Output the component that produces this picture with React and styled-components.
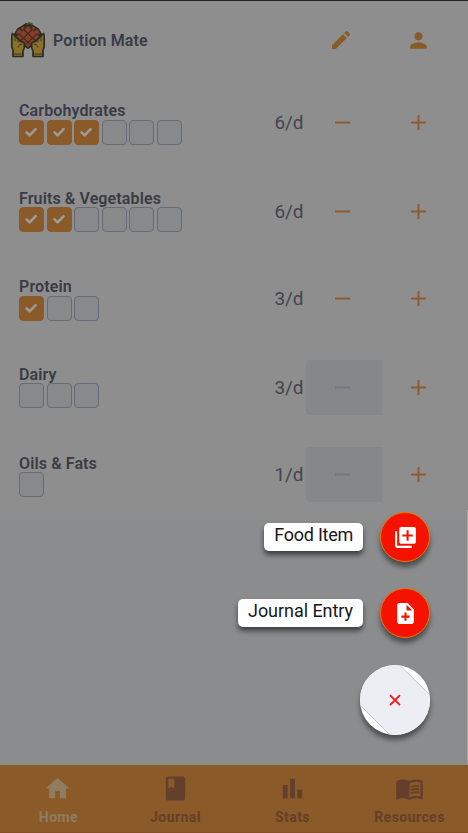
import React from "react";
import styled, { createGlobalStyle, css } from "styled-components";
import { MdEdit, MdPerson, MdHome, MdBook, MdBarChart, MdMenuBook, MdLibraryAdd, MdNoteAdd } from "react-icons/md";

const c = {
  page: "#8e8e8e", lower: "#8b8c8e", orange: "#8a5a28", ink: "#3a3b45",
  line: "#686a78", disabled: "#868789", brown: "#643f2b", active: "#8e7d60", red: "#f51300",
};

const GlobalStyle = createGlobalStyle`
  * { box-sizing: border-box; }
  body { margin: 0; font-family: Roboto, sans-serif; overflow: hidden; }
`;
const Screen = styled.div`
  position: relative;
  display: flex;
  flex-direction: column;
  width: 468px;
  height: 833px;
  background: ${c.lower};
`;
const Main = styled.main`
  height: 520px;
  background: ${c.page};
  border-top: 1px solid #252227;
`;
const Header = styled.header`
  display: flex;
  align-items: center;
  height: 78px;
  padding: 0 11px 0 10px;
`;
const Title = styled.h1`
  flex: 1;
  margin: 1px 0 0 7px;
  font-size: 16px;
  line-height: 20px;
  font-weight: 600;
  letter-spacing: 0.1px;
  color: ${c.ink};
`;
const HeaderAction = styled.button`
  display: flex;
  align-items: center;
  justify-content: center;
  width: 77px;
  height: 54px;
  padding: ${(p) => p.$nudge};
  border: 0;
  background: none;
  color: ${c.orange};
  font-size: ${(p) => p.$size}px;
`;
const FoodRow = styled.section`
  display: flex;
  height: 88px;
  padding: 16px 10.5px 0 19px;
`;
const Details = styled.div`
  flex: 1;
  padding-top: 6px;
`;
const Name = styled.h2`
  margin: 0;
  height: 19px;
  font-size: 16px;
  line-height: ${(p) => p.$leading}px;
  font-weight: 600;
  letter-spacing: 0.12px;
  color: ${c.ink};
`;
const Boxes = styled.div`
  display: flex;
  gap: 2.5px;
  margin-top: ${(p) => -p.$lift}px;
`;
const Box = styled.span`
  display: grid;
  place-items: center;
  width: 25px;
  height: 25px;
  border: 1px solid ${c.line};
  border-radius: 4px;
  background: #88898b;
  ${(p) => p.$checked && css`background: ${c.orange}; border-color: ${c.orange};`}
`;
const Controls = styled.div`
  display: flex;
  padding-top: ${(p) => p.$drop}px;
`;
const Amount = styled.span`
  margin-top: 13.5px;
  width: 31px;
  font-size: 19px;
  line-height: 28px;
  letter-spacing: -0.1px;
  white-space: nowrap;
  color: #44454d;
`;
const StepButton = styled.button`
  display: grid;
  place-items: center;
  width: 76px;
  height: 55px;
  padding: 0 2px 0 0;
  border: 0;
  border-radius: 4px 0 0 4px;
  background: ${(p) => (p.disabled ? c.disabled : "transparent")};
  color: ${(p) => (p.disabled ? "#747582" : "#925a2c")};
`;
const TabBar = styled.nav`
  display: grid;
  grid-template-columns: repeat(4, 1fr);
  height: 68px;
  margin-top: auto;
  background: ${c.orange};
  border-bottom: 1px solid #855026;
`;
const Tab = styled.a`
  display: flex;
  flex-direction: column;
  align-items: center;
  padding: 8px 0 0 0;
  color: ${(p) => (p.$active ? c.active : c.brown)};
`;
const TabIcon = styled.span`
  display: flex;
  align-items: center;
  height: 30px;
  padding-right: ${(p) => p.$inset}px;
  font-size: 29px;
`;
const TabText = styled.span`
  margin-top: 6px;
  font-size: 14px;
  font-weight: 700;
  line-height: 16px;
  letter-spacing: 0.45px;
`;
const EdgeLine = styled.div`
  position: absolute;
  top: 510px;
  right: 0;
  width: 1px;
  height: 254px;
  background: #a4a4a4;
`;
const SpeedDial = styled.div`
  position: absolute;
  right: 38px;
  top: 512.4px;
  display: flex;
  flex-direction: column;
  align-items: flex-end;
  gap: 26px;
`;
const DialItem = styled.div`
  display: flex;
  align-items: center;
  gap: 17px;
`;
const DialLabel = styled.span`
  height: 28px;
  padding: 0 10px;
  border-radius: 5px;
  background: #fff;
  color: #171717;
  font-size: 18px;
  line-height: 24px;
  letter-spacing: ${(p) => p.$spacing}px;
  box-shadow: 0 4px 5px rgba(0, 0, 0, 0.55);
`;
const DialButton = styled.button`
  display: grid;
  place-items: center;
  width: 50px;
  height: 50px;
  padding: 0;
  border: 1px solid #e77a00;
  border-radius: 50%;
  background: ${c.red};
  color: #fff;
  font-size: ${(p) => p.$size}px;
  box-shadow: 0 5px 5px rgba(0, 0, 0, 0.45);
`;
const CloseButton = styled.button`
  display: grid;
  width: 70px;
  height: 70px;
  margin-top: 0.4px;
  padding: 0;
  border: 0;
  border-radius: 50%;
  overflow: hidden;
  background: #fff;
  box-shadow: 0 5px 5px rgba(0, 0, 0, 0.45);
`;

const Check = () => (
  <svg width="13" height="11" viewBox="0 0 13 11">
    <path d="M1.6 5.3 4.6 8.3 10.6 2.1" fill="none" stroke="#9c9b9a" strokeWidth="2.6" strokeLinecap="round" strokeLinejoin="round" />
  </svg>
);
const StepIcon = ({ plus }) => (
  <svg width="15" height="15" viewBox="0 0 15 15" stroke="currentColor" strokeWidth="2">
    <path d={plus ? "M0 7.5H15M7.5 0V15" : "M0 7.5H15"} />
  </svg>
);
const Logo = () => (
  <svg width="36" height="38" viewBox="0 0 36 38" strokeLinejoin="round" strokeLinecap="round">
    <path d="M5 13 8 8 13 5 16 3 20 3 23 5 28 8 31 13 24 22 18 27 12 22Z" fill="#3b2c24" stroke="#2d2b28" strokeWidth="2" />
    <g fill="#8d3f25">
      <path d="M18 5.2 21.3 8.5 18 11.8 14.7 8.5ZM13.5 9.2 17 12.7 13.5 16.2 10 12.7ZM22.5 9.2 26 12.7 22.5 16.2 19 12.7ZM18 13.5 21.5 17 18 20.5 14.5 17ZM9 13.5 12.5 17 9.5 20 6 16ZM27 13.5 30 16 26.5 20 23.5 17ZM13.5 17.8 17 21.3 14.5 23.7 11 20.5ZM22.5 17.8 25 20.5 21.5 23.7 19 21.3ZM18 22 20.5 24 18 26 15.5 24ZM9 8 12 11 9 13 6 12ZM27 8 24 11 27 13 30 12ZM13 5.5 14.5 7 12.5 9 10.5 7ZM23 5.5 25.5 7 23.5 9 21.5 7Z" />
    </g>
    <path d="m17 3 2-1 3 1" fill="none" stroke="#3b5928" strokeWidth="1.8" />
    <g fill="#89732a" stroke="#2d2b26" strokeWidth="1.7">
      <path d="M2.5 12.5Q1.5 14 1.8 17V26L3 29V35.5H13V30L14.5 26 14 21.5 11 20.5 6 16Z" />
      <path d="M33.5 12.5Q34.5 14 34.2 17V26L33 29V35.5H23V30L21.5 26 22 21.5 25 20.5 30 16Z" />
    </g>
    <path d="M5 16V20M8 17V21M10 19V21M31 16V20M28 17V21M26 19V21M8 26Q9 23 12 23M28 26Q27 23 24 23M3 33H13M23 33H33" fill="none" stroke="#393126" strokeWidth="0.9" />
  </svg>
);
const CloseArt = () => (
  <svg width="70" height="70" viewBox="0 0 70 70">
    <path d="M-10-10H29.5L80 40V80H40L-10 30Z" fill="#edeef3" stroke="#c3c7d8" />
    <path d="m30 30.2 10 10M40 30.2 30 40.2" stroke="#fa1515" strokeWidth="1.9" />
  </svg>
);

const foods = [
  { name: "Carbohydrates", used: 3, total: 6, lift: 0, drop: 0, leading: 19 },
  { name: "Fruits & Vegetables", used: 2, total: 6, lift: 1, drop: 1, leading: 19 },
  { name: "Protein", used: 1, total: 3, lift: 0, drop: 0, leading: 19 },
  { name: "Dairy", used: 0, total: 3, lift: 0.6, drop: 1, leading: 19 },
  { name: "Oils & Fats", used: 0, total: 1, lift: 0, drop: 0, leading: 21 },
];
const tabs = [
  { name: "Home", Icon: MdHome, active: true, inset: 2 },
  { name: "Journal", Icon: MdBook, inset: 1 },
  { name: "Stats", Icon: MdBarChart, inset: 1 },
  { name: "Resources", Icon: MdMenuBook, inset: 0 },
];

export default function App() {
  return (
    <Screen>
      <GlobalStyle />
      <Main>
        <Header>
          <Logo />
          <Title>Portion Mate</Title>
          <HeaderAction $size={24} $nudge="0 1px 1px 0" aria-label="Edit"><MdEdit /></HeaderAction>
          <HeaderAction $size={25} $nudge="0" aria-label="Profile"><MdPerson /></HeaderAction>
        </Header>
        {foods.map((food) => (
          <FoodRow key={food.name}>
            <Details>
              <Name $leading={food.leading}>{food.name}</Name>
              <Boxes $lift={food.lift}>
                {Array.from({ length: food.total }, (_, i) => (
                  <Box key={i} $checked={i < food.used}>{i < food.used && <Check />}</Box>
                ))}
              </Boxes>
            </Details>
            <Controls $drop={food.drop}>
              <Amount>{food.total}/d</Amount>
              <StepButton disabled={food.used === 0} aria-label="Remove portion"><StepIcon /></StepButton>
              <StepButton aria-label="Add portion"><StepIcon plus /></StepButton>
            </Controls>
          </FoodRow>
        ))}
      </Main>
      <TabBar>
        {tabs.map(({ name, Icon, active, inset }) => (
          <Tab key={name} $active={active}>
            <TabIcon $inset={inset}><Icon /></TabIcon>
            <TabText>{name}</TabText>
          </Tab>
        ))}
      </TabBar>
      <EdgeLine />
      <SpeedDial>
        <DialItem>
          <DialLabel $spacing={-0.25}>Food Item</DialLabel>
          <DialButton $size={25} aria-label="Add food item"><MdLibraryAdd /></DialButton>
        </DialItem>
        <DialItem>
          <DialLabel $spacing={-0.05}>Journal Entry</DialLabel>
          <DialButton $size={25} aria-label="Add journal entry"><MdNoteAdd /></DialButton>
        </DialItem>
        <CloseButton aria-label="Close"><CloseArt /></CloseButton>
      </SpeedDial>
    </Screen>
  );
}
